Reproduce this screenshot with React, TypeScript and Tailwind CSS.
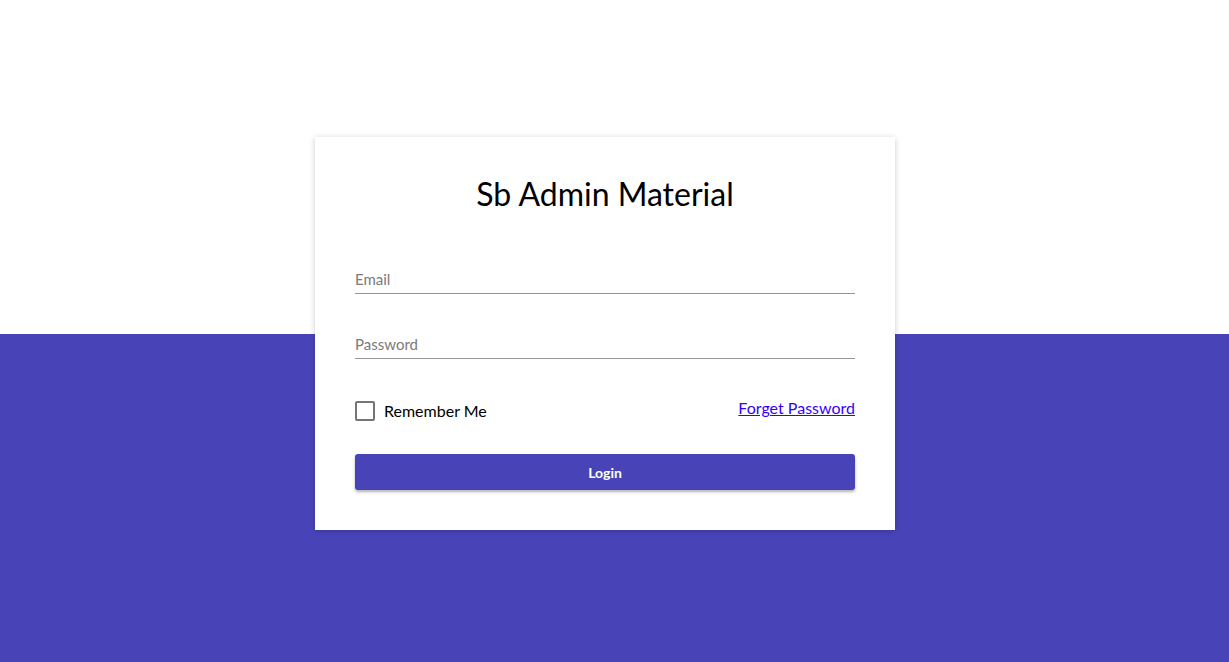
import { useState } from "react";

export default function App() {
    const [remember, setRemember] = useState(false);

    return (
        <div className="min-h-[662px] w-full bg-[linear-gradient(to_bottom,#ffffff_334px,#4844b8_334px)] font-['Lato','Open_Sans',sans-serif] flex justify-center pt-[137px] pr-[19px]">
            <div className="w-[580px] h-[393px] bg-white px-10 pt-[37px] pb-10 shadow-[0_1px_6px_rgba(0,0,0,0.2)]">
                <h1 className="text-center text-[32px] leading-[40px] text-black">Sb Admin Material</h1>

                {/* Fields */}
                <div className="mt-[50px] h-[30px] border-b border-[#949494] flex items-end pb-[3px]">
                    <input
                        type="email"
                        placeholder="Email"
                        className="w-full bg-transparent text-[15px] text-black placeholder:text-[#7a7a7a] focus:outline-none"
                    />
                </div>
                <div className="mt-[35px] h-[30px] border-b border-[#949494] flex items-end pb-[3px]">
                    <input
                        type="password"
                        placeholder="Password"
                        className="w-full bg-transparent text-[15px] text-black placeholder:text-[#7a7a7a] focus:outline-none"
                    />
                </div>

                {/* Remember / forget */}
                <div className="mt-[40px] h-6 flex items-center justify-between">
                    <label className="flex items-center gap-[9px] cursor-pointer">
                        <span
                            onClick={() => setRemember(!remember)}
                            className={`w-5 h-5 rounded-[2px] border-2 ${remember ? "border-[#4844b8] bg-[#4844b8]" : "border-[#757575]"}`}
                        />
                        <span className="text-[16px] text-black">Remember Me</span>
                    </label>
                    <a href="#" className="text-[16px] text-[#3300ff] underline -mt-[6px]">Forget Password</a>
                </div>

                <button className="mt-[31px] w-full h-9 rounded-[3px] bg-[#4844b8] text-white text-[14px] font-bold shadow-[0_2px_3px_rgba(0,0,0,0.3)]">
                    Login
                </button>
            </div>
        </div>
    );
}
